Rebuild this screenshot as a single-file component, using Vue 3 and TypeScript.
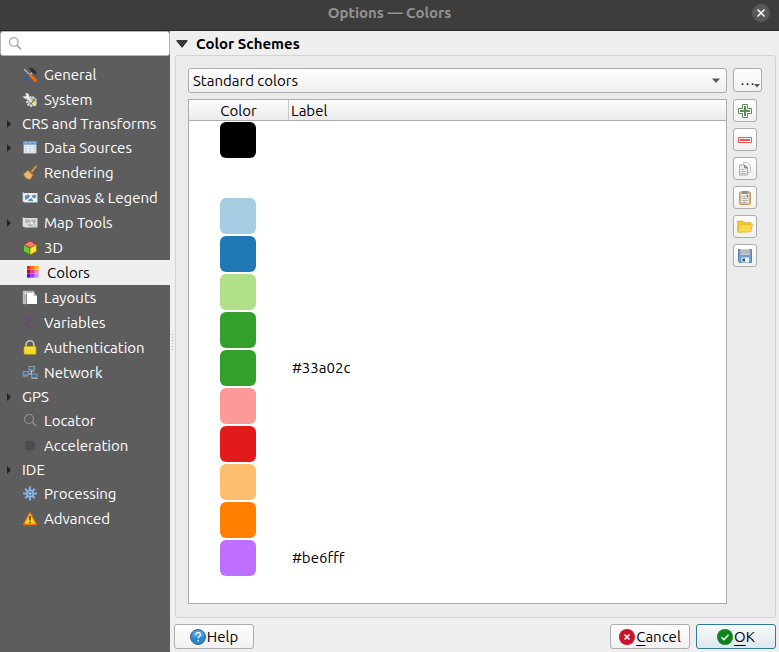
<script setup lang="ts">
import { ref } from 'vue'

interface Section {
  name: string
  icon?: string
  group?: boolean
}

interface Swatch {
  color: string
  label: string
}

const sections: Section[] = [
  { name: 'General', icon: 'tools' },
  { name: 'System', icon: 'system' },
  { name: 'CRS and Transforms', group: true },
  { name: 'Data Sources', icon: 'table', group: true },
  { name: 'Rendering', icon: 'brush' },
  { name: 'Canvas & Legend', icon: 'canvas' },
  { name: 'Map Tools', icon: 'map', group: true },
  { name: '3D', icon: 'cube' },
  { name: 'Colors', icon: 'colors' },
  { name: 'Layouts', icon: 'layouts' },
  { name: 'Variables', icon: 'epsilon' },
  { name: 'Authentication', icon: 'lock' },
  { name: 'Network', icon: 'network' },
  { name: 'GPS', group: true },
  { name: 'Locator', icon: 'search' },
  { name: 'Acceleration', icon: 'chip' },
  { name: 'IDE', group: true },
  { name: 'Processing', icon: 'gear' },
  { name: 'Advanced', icon: 'warning' },
]

const swatches: Swatch[] = [
  { color: '#000000', label: '' },
  { color: '#ffffff', label: '' },
  { color: '#a6cee3', label: '' },
  { color: '#1f78b4', label: '' },
  { color: '#b2df8a', label: '' },
  { color: '#33a02c', label: '' },
  { color: '#33a02c', label: '#33a02c' },
  { color: '#fb9a99', label: '' },
  { color: '#e31a1c', label: '' },
  { color: '#fdbf6f', label: '' },
  { color: '#ff7f00', label: '' },
  { color: '#be6fff', label: '#be6fff' },
]

const gridColors: string[] = [
  '#ff1a00', '#ff7200', '#ffb400',
  '#c80046', '#e83a8c', '#f08ab4',
  '#6a00ff', '#a03cf0', '#c88cff',
]

const current = ref('Colors')
const filter = ref('')
const scheme = ref('Standard colors')
</script>

<template>
  <div class="window">
    <header class="titlebar">
      <h1 class="title">Options — Colors</h1>
      <button class="close" type="button" aria-label="Close">
        <svg viewBox="0 0 18 18" width="18" height="18"><path d="M5.500 5.500l7 7M12.500 5.500l-7 7" stroke="#fff" stroke-width="1.500" fill="none" /></svg>
      </button>
    </header>

    <div class="body">
      <aside class="sidebar">
        <label class="search">
          <svg viewBox="0 0 16 16" width="16" height="16"><circle cx="5.800" cy="6" r="4.300" fill="none" stroke="#999" stroke-width="1.100" /><path d="M9 9.200l4 4" stroke="#999" stroke-width="1.500" /></svg>
          <input v-model="filter" type="text" aria-label="Search options" />
        </label>
        <nav class="tree">
          <button
            v-for="s in sections"
            :key="s.name"
            type="button"
            class="item"
            :class="{ plain: !s.icon, selected: s.name === current }"
            @click="current = s.name"
          >
            <span class="expander">
              <svg v-if="s.group" viewBox="0 0 4 8" width="4" height="8"><path d="M0 0l4 4-4 4z" fill="#222" /></svg>
            </span>
            <svg v-if="s.icon" class="icon" viewBox="0 0 16 16" width="16" height="16">
              <g v-if="s.icon === 'tools'">
                <path d="M2 2l7 7" stroke="#b9b9b9" stroke-width="1.300" />
                <path d="M11.500 4L7 9" stroke="#c4bfae" stroke-width="1.700" />
                <path d="M7 8.800l-4.800 4.700" stroke="#2f5f9e" stroke-width="2.800" stroke-linecap="round" />
                <path d="M8.300 8.300l5.200 5" stroke="#f06a12" stroke-width="3" stroke-linecap="round" />
                <path d="M6 1.300C9.500 0 12 1.500 14.800 6l-1.700 1.700c-.4-1.500-1.400-2.200-2.400-1.400L8.800 4.400C9 3 8 2 6 1.300z" fill="#2a2f31" />
              </g>
              <g v-else-if="s.icon === 'system'">
                <circle cx="9.500" cy="9.500" r="4.400" fill="#91a9bc" stroke="#d9e2e8" stroke-width="2" stroke-dasharray="2 1" />
                <path d="M1 4l2.200.5 1-1L3.500 1.200C6 .7 7.500 2.200 6.800 4.500L9.500 7.200 7.700 9 5 6.300C3 7.200 1.200 6.200 1 4z" fill="#f1f1ee" stroke="#a5a5a0" stroke-width=".5" />
                <path d="M8.500 8.500l4.500 3.800" stroke="#f3e07a" stroke-width="3" stroke-linecap="round" />
                <path d="M9 12l3.500-5" stroke="#3d5363" stroke-width="1" />
              </g>
              <g v-else-if="s.icon === 'table'">
                <path d="M1.500 1.500h13v12h-13z" fill="#bccbdb" />
                <path d="M1.500 1.500h13v3h-13z" fill="#5b93d1" />
                <path d="M2.500 2.800h3M6.800 2.800h3M11 2.800h2.500" stroke="#a9cdf0" />
                <path d="M2.300 5h11.400v7.800H2.300z" fill="#eef2f7" />
                <path d="M3 6.500h2.300M3 8.800h2.300M3 11.200h2.300M6.800 6.500h2.500M6.800 8.800h2.500M6.800 11.200h2.500M10.800 6.500h2.300M10.800 8.800h2.300M10.800 11.200h2.300" stroke="#c3d2e2" stroke-width="1.400" />
              </g>
              <g v-else-if="s.icon === 'brush'">
                <path d="M14 1.500L9.500 6.800" stroke="#d99a3e" stroke-width="1.900" stroke-linecap="round" />
                <path d="M6.500 5l5 4.500-3.300 4.800C5.500 14.500 2.500 12.500 1.500 9z" fill="#e7b368" stroke="#c07c25" stroke-width=".6" />
                <path d="M6.300 5l5 4.600" stroke="#a5631c" stroke-width="1.500" />
                <path d="M4 9.500l3.200 3.500M5.500 8.500l3 3.200" stroke="#f2cf90" stroke-width=".7" />
              </g>
              <g v-else-if="s.icon === 'canvas'">
                <path d="M.7 2l1.800 1h13v9.500H3L.7 11.500z" fill="#e4e5e5" />
                <path d="M2.800 4.200h11.500v7H2.800z" fill="#f4f6f8" />
                <path d="M3 5.500l3.500-1 1.800 1.300-2 2.700L3 10zM9.500 5.500l3.700-1 1 2.200-1.500 1.800-2-.8zM6.500 9.500l3-1.500 2 3.000H6z" fill="#5b8dbf" />
              </g>
              <g v-else-if="s.icon === 'map'">
                <path d="M.7 2l1.800 1h13v9.500H3L.7 11.500z" fill="#dedede" />
                <path d="M3 4.500h4L8 6 5 8.500 3 7zM9 4.500h5v2.300l-2.300.5zM5 10.500L7.300 8.500 8.500 11z" fill="#b4b4b4" />
                <path d="M7.500 5.500l5.500 2-2 .8 2.800 3-1 1-2.800-3-1 2z" fill="#f7f7f7" stroke="#8a8a8a" stroke-width=".6" />
              </g>
              <g v-else-if="s.icon === 'cube'">
                <path d="M8 .8l6.500 3.700L8 8 1.500 4.500z" fill="#f77b72" stroke="#a8150c" stroke-width=".8" />
                <path d="M1.500 4.600L8 8v7l-6.500-3.600z" fill="#6ac62e" stroke="#2d7010" stroke-width=".8" />
                <path d="M14.500 4.600L8 8v7l6.500-3.600z" fill="#f7e53a" stroke="#967a08" stroke-width=".8" />
              </g>
              <g v-else-if="s.icon === 'colors'">
                <rect v-for="(c, i) in gridColors" :key="i" :x="2 + (i % 3) * 4" :y="1 + Math.floor(i / 3) * 4" width="3.700" height="3.700" :fill="c" />
              </g>
              <g v-else-if="s.icon === 'layouts'">
                <path d="M1 1h11v3H4v10H1z" fill="#d3d3cd" stroke="#9b9b96" stroke-width=".6" />
                <path d="M2 5h1M2 7h1M2 9h1M2 11h1M5 1.500v1.200M7 1.500v1.200M9 1.500v1.200" stroke="#777" stroke-width=".7" />
                <path d="M4.800 3h7.200l3 3v8H4.800z" fill="#fff" /><path d="M12 3v3h3z" fill="#b5b5b5" />
              </g>
              <path v-else-if="s.icon === 'epsilon'" d="M11.300 3.500C9 1.300 5.200 2.100 5.200 4.500c0 1.600 1.600 2.400 3.600 2.400C5.800 6.900 4 8.300 4 10c0 3 4.800 3.500 7.500.8" fill="none" stroke="#6c4778" stroke-width="1.500" stroke-linecap="round" />
              <g v-else-if="s.icon === 'lock'">
                <path d="M4.200 7.500V4.600a3.800 3.800 0 0 1 7.600 0v2.900" fill="none" stroke="#c9c9c4" stroke-width="1.600" />
                <rect x="2" y="6.500" width="12" height="7.700" rx=".8" fill="#f2dc24" stroke="#c7aa09" stroke-width=".6" />
                <path d="M3 8h10" stroke="#fff27a" stroke-width=".8" />
              </g>
              <g v-else-if="s.icon === 'network'">
                <path d="M9.500 6v3H5M9.500 9l3 1.500" fill="none" stroke="#c6c6c6" />
                <g stroke="#a9b0b6" stroke-width=".7" fill="#376fab"><path d="M7 1.500h5.500V5H7zM1 6.500h5.500V10H1zM9.500 9H15v3.500H9.500z" /></g>
                <path d="M7 6h5.500M1 11h5.500M9.500 13.500h6" stroke="#a9a9a5" stroke-width="1.200" />
              </g>
              <g v-else-if="s.icon === 'search'">
                <circle cx="7" cy="6" r="4.500" fill="none" stroke="#929292" stroke-width="1.200" /><path d="M10.300 9.300l3.900 3.900" stroke="#929292" stroke-width="1.600" />
              </g>
              <g v-else-if="s.icon === 'chip'">
                <path d="M3.500 3h9v9h-9z" fill="#4a4a4a" />
                <path d="M4.500 2v11M6.500 2v11M8.500 2v11M10.500 2v11M2.500 4h11M2.500 6h11M2.500 8h11M2.500 10h11" stroke="#4f4f4f" stroke-width=".9" />
              </g>
              <g v-else-if="s.icon === 'gear'">
                <path d="M8 .5v14M1 7.500h14M3.200 2.700l9.600 9.600M12.800 2.700l-9.600 9.600" stroke="#8ab4e6" stroke-width="2" />
                <circle cx="8" cy="7.500" r="4" fill="#8ab4e6" /><circle cx="8" cy="7.500" r="2.400" fill="#4d74a3" /><circle cx="8" cy="7.500" r="1.300" fill="#b8d1ec" />
              </g>
              <g v-else-if="s.icon === 'warning'">
                <path d="M8 1.500L14.500 13.500h-13z" fill="#fcd116" stroke="#e2730c" stroke-width="1.300" stroke-linejoin="round" />
                <path d="M8 5v4.500M8 10.800v1.500" stroke="#4c3200" stroke-width="1.500" />
              </g>
            </svg>
            <span>{{ s.name }}</span>
          </button>
        </nav>
      </aside>

      <div class="splitter"><i v-for="n in 6" :key="n"></i></div>

      <main class="content">
        <h2 class="heading">
          <svg viewBox="0 0 12 8" width="12" height="8"><path d="M.7.700h10.600L6 7.300z" fill="#3b3b3b" stroke="#222" /></svg>
          Color Schemes
        </h2>

        <section class="panel">
          <div class="row">
            <div class="combo">
              <select v-model="scheme" aria-label="Color scheme">
                <option>Standard colors</option>
                <option>Project colors</option>
                <option>Recent colors</option>
              </select>
              <svg class="caret" viewBox="0 0 8 5" width="8" height="5"><path d="M0 .5h8L4 5z" fill="#555" /></svg>
            </div>
            <button class="more" type="button" aria-label="Scheme options">
              <span>…</span>
              <svg class="more-caret" viewBox="0 0 6 4" width="6" height="4"><path d="M0 0h6L3 3.500z" fill="#555" /></svg>
            </button>
          </div>

          <div class="row grow">
            <div class="list">
              <table>
                <thead>
                  <tr><th class="color-col" scope="col">Color</th><th scope="col">Label</th></tr>
                </thead>
                <tbody>
                  <tr v-for="(s, i) in swatches" :key="i">
                    <td class="color-col"><span class="swatch" :style="{ backgroundColor: s.color }"></span></td>
                    <td>{{ s.label }}</td>
                  </tr>
                </tbody>
              </table>
            </div>

            <div class="tools">
              <button type="button" aria-label="Add color">
                <svg viewBox="0 0 16 16" width="16" height="16"><path d="M5.500 1.500h5v4h4v5h-4v4h-5v-4h-4v-5h4z" fill="#fff" stroke="#5a8c5a" /><path d="M8 3v10M3 8h10" stroke="#5a8c5a" stroke-width="2" /></svg>
              </button>
              <button type="button" aria-label="Remove color">
                <svg viewBox="0 0 16 16" width="16" height="16"><path d="M1.500 5.500h13v5h-13z" fill="#fff" stroke="#ec5151" /><path d="M3 8h10" stroke="#ec5151" stroke-width="2" /></svg>
              </button>
              <button type="button" aria-label="Copy colors">
                <svg viewBox="0 0 16 16" width="16" height="16"><path d="M6.500 1.500h4l3 3v7h-7z" fill="#f4f4f4" stroke="#c6c6c6" /><path d="M2.500 4h5l3 3v7h-8z" fill="#ececec" stroke="#a8a8a8" /><path d="M7.500 4v3h3z" fill="#999" stroke="#888" /><path d="M4 8.500h3M4 10.500h5M4 12.500h5" stroke="#b5b5b5" /></svg>
              </button>
              <button type="button" aria-label="Paste colors">
                <svg viewBox="0 0 16 16" width="16" height="16"><rect x="2.500" y="2" width="11" height="12.500" rx="1" fill="#e0b578" stroke="#cc9f5c" /><path d="M4 3h8v10.500H4z" fill="#ececec" stroke="#aaa" stroke-width=".5" /><path d="M5 1h6v3H5z" fill="#8f8f8f" /><path d="M5.500 6.500h3M5.500 8.500h5M5.500 10.500h5M5.500 12.500h4" stroke="#aaa" /><path d="M9 5h2v3z" fill="#777" /></svg>
              </button>
              <button type="button" aria-label="Import colors">
                <svg viewBox="0 0 16 16" width="16" height="16"><path d="M.7 13V2h5l1.300 1.700h7V6" fill="#f0c933" stroke="#d8ac25" stroke-width=".8" /><path d="M.7 13.300L2.500 6l13-.8-1.700 7.600z" fill="#fbd849" stroke="#dcb22c" stroke-width=".8" /></svg>
              </button>
              <button type="button" aria-label="Export colors">
                <svg viewBox="0 0 16 16" width="16" height="16"><path d="M1.500 1.500h13v13h-12l-1-1z" fill="#729fcf" stroke="#5583b5" /><path d="M3.500 1h9v6h-9z" fill="#cfcfcf" /><path d="M3.500 3h9M3.500 5h9" stroke="#a4a4a4" /><path d="M4.500 9.500h7.500v5H4.500z" fill="#f1f1f1" /><path d="M5.500 10.500h2.500v3H5.500z" fill="#345c86" /></svg>
              </button>
            </div>
          </div>
        </section>

        <footer class="actions">
          <button class="btn" type="button">
            <svg viewBox="0 0 16 16" width="16" height="16"><circle cx="8" cy="8" r="7.500" fill="#2886d0" stroke="#46637c" /><path d="M2 7a6 6 0 0 1 12 0c-4 2-8 2-12 0z" fill="#4ba3e2" /><path d="M5.700 5.800c0-3 4.800-3 4.800-.2 0 1.800-2.300 1.900-2.300 4M8.200 11v1.500" fill="none" stroke="#fff" stroke-width="1.300" /></svg>
            <span>Help</span>
          </button>
          <span class="spacer"></span>
          <button class="btn" type="button">
            <svg viewBox="0 0 16 16" width="16" height="16"><circle cx="8" cy="8" r="8" fill="#c7162b" /><path d="M5.500 5.500l5 5M10.500 5.500l-5 5" stroke="#fff" stroke-width="1.600" /></svg>
            <span><u>C</u>ancel</span>
          </button>
          <button class="btn primary" type="button">
            <svg viewBox="0 0 16 16" width="16" height="16"><circle cx="8" cy="8" r="8" fill="#0e8420" /><path d="M4.500 8.200l2.500 2.500 4.500-5" fill="none" stroke="#fff" stroke-width="1.500" /></svg>
            <span><u>O</u>K</span>
          </button>
        </footer>
      </main>
    </div>
  </div>
</template>

<style>
body {
  margin: 0;
}
</style>

<style scoped>
.window {
  display: flex;
  flex-direction: column;
  box-sizing: border-box;
  min-height: 100vh;
  background: #efefef;
  color: #000;
  font-family: Ubuntu, "Noto Sans", sans-serif;
  font-size: 15px;
  line-height: 20px;
}
.window *,
.window *::before {
  box-sizing: border-box;
}
button,
input,
select {
  margin: 0;
  padding: 0;
  border: 0;
  color: inherit;
  font: inherit;
}
svg {
  display: block;
  flex: none;
}
.titlebar {
  display: grid;
  grid-template-columns: 1fr auto 1fr;
  align-items: center;
  height: 31px;
  padding: 0 9px 5px;
  border-bottom: 1px solid #262626;
  background: #3d3d3d;
}
.title {
  grid-column: 2;
  margin: 0;
  color: #929292;
  font-size: 15px;
  line-height: 20px;
}
.close {
  justify-self: end;
  width: 18px;
  height: 18px;
  border-radius: 50%;
  background: #595959;
}
.body {
  display: flex;
  flex: 1;
}
.sidebar {
  flex: 0 0 170px;
  min-width: 0;
  background: #5d5d5d;
}
.search {
  display: flex;
  align-items: center;
  gap: 4px;
  height: 25px;
  padding: 0 7px;
  border: 1px solid #b4b4b4;
  border-radius: 3px;
  background: #fff;
}
.search input {
  flex: 1;
  min-width: 0;
  outline: 0;
  background: transparent;
}
.tree {
  display: flex;
  flex-direction: column;
  padding-top: 6px;
}
.item {
  display: flex;
  align-items: center;
  height: 25px;
  background: transparent;
  color: #fff;
  text-align: left;
  white-space: nowrap;
}
.item.plain {
  height: 23px;
}
.item.selected {
  padding-left: 3px;
  background: #efefef;
  color: #000;
}
.expander {
  width: 22px;
  padding-left: 7px;
}
.icon {
  margin-right: 6px;
}
.splitter {
  display: flex;
  flex: 0 0 4px;
  flex-direction: column;
  align-items: center;
  justify-content: center;
  gap: 2px;
}
.splitter i {
  width: 1px;
  height: 1px;
  background: #aaa;
}
.content {
  display: flex;
  flex: 1;
  flex-direction: column;
  min-width: 0;
  padding: 0 3px 3px 0;
}
.heading {
  display: flex;
  align-items: center;
  gap: 8px;
  height: 24px;
  margin: 0;
  padding: 2px 2px 0;
  font-size: 15px;
}
.panel {
  display: flex;
  flex: 1;
  flex-direction: column;
  gap: 6px;
  margin-left: 1px;
  padding: 12px 13px 13px 12px;
  border: 1px solid #d3d3d3;
  border-radius: 3px;
  background: #ebebeb;
}
.row {
  display: flex;
  gap: 6px;
}
.grow {
  flex: 1;
}
.combo {
  position: relative;
  flex: 1;
}
.combo select {
  display: block;
  width: 100%;
  height: 25px;
  padding: 0 24px 0 4px;
  border: 1px solid #acacac;
  border-radius: 3px;
  background: linear-gradient(#fefefe, #efefef);
  appearance: none;
}
.caret {
  position: absolute;
  top: 10px;
  right: 7px;
}
.more,
.tools button,
.btn {
  border: 1px solid #acacac;
  border-radius: 3px;
  background: linear-gradient(#fefefe, #f1f1f1);
}
.more {
  position: relative;
  width: 29px;
  height: 24px;
}
.more-caret {
  position: absolute;
  right: 1px;
  bottom: 3px;
}
.list {
  flex: 1;
  border: 1px solid #acacac;
  background: #fff;
}
table {
  width: 100%;
  border-collapse: separate;
  border-spacing: 0;
  table-layout: fixed;
}
th {
  height: 21px;
  padding: 1px 2px 0;
  border-bottom: 1px solid #acacac;
  background: linear-gradient(#fcfcfc, #ebebeb);
  font-weight: 400;
  line-height: 19px;
  text-align: left;
}
th.color-col {
  width: 100px;
  border-right: 1px solid #c8c8c8;
  text-align: center;
}
td {
  height: 38px;
  padding: 0 3px;
}
td.color-col {
  padding-right: 5px;
}
.swatch {
  display: block;
  width: 36px;
  height: 36px;
  margin: 0 auto;
  border-radius: 6px;
}
.tools {
  display: flex;
  flex: 0 0 29px;
  flex-direction: column;
  gap: 6px;
}
.tools button {
  display: flex;
  align-items: center;
  justify-content: center;
  width: 24px;
  height: 23px;
}
.actions {
  display: flex;
  gap: 6px;
  padding-top: 6px;
}
.spacer {
  flex: 1;
}
.btn {
  display: flex;
  align-items: center;
  justify-content: center;
  gap: 1px;
  width: 80px;
  height: 25px;
}
.btn u {
  text-underline-offset: 3px;
}
.primary {
  border-color: #2f78a0;
  background: linear-gradient(#f8fbfd, #dde7ee);
}
</style>
